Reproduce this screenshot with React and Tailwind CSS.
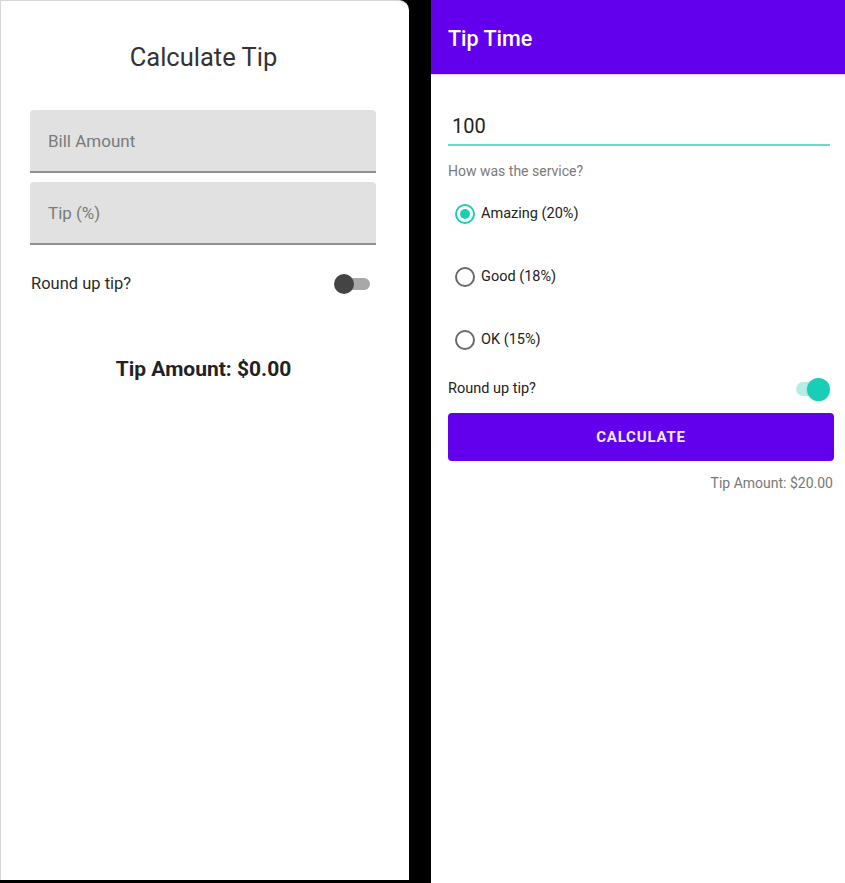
import React from 'react';

const font = { fontFamily: 'Roboto, "Noto Sans", sans-serif' };

// --- Left screen: plain calculator form ---
const FilledField = ({ label, className = '' }) => (
    <div className={`h-[63px] bg-[#e1e1e1] rounded-t-[4px] border-b-2 border-[#8f8f8f] flex items-center px-[18px] pt-[2px] ${className}`}>
        <span className="text-[17px] text-[#7a7a7a]">{label}</span>
    </div>
);

const CalculateTip = () => (
    <div className="w-[409px] h-[880px] bg-white rounded-tr-[10px] border-l border-t border-[#d6d6d6] flex flex-col">
        <h1 className="text-[25.5px] leading-[30px] text-[#333] text-center mt-[41px] pr-[3px]">Calculate Tip</h1>

        <div className="ml-[29px] mr-[33px] mt-[38px] flex flex-col gap-[9px]">
            <FilledField label="Bill Amount" />
            <FilledField label="Tip (%)" />
        </div>

        <div className="ml-[30px] mr-[39px] mt-[27px] h-[24px] flex items-center justify-between">
            <span className="text-[16.5px] text-[#2b2b2b]">Round up tip?</span>
            <div className="relative w-[36px] h-[20px] flex items-center">
                <div className="absolute left-[8px] right-0 h-[12px] rounded-full bg-[#a8a8a8]" />
                <div className="relative w-[20px] h-[20px] rounded-full bg-[#444]" />
            </div>
        </div>

        <p className="mt-[58px] text-center text-[21px] font-bold text-[#222] pr-[3px]">Tip Amount: $0.00</p>
    </div>
);

// --- Right screen: Material "Tip Time" ---
const Radio = ({ label, checked }) => (
    <div className="h-[63px] flex items-center gap-[6px]">
        <div className={`w-[20px] h-[20px] rounded-full border-2 flex items-center justify-center ${checked ? 'border-[#1dcdb8]' : 'border-[#6a6a6a]'}`}>
            {checked && <div className="w-[10px] h-[10px] rounded-full bg-[#1dcdb8]" />}
        </div>
        <span className="text-[14.5px] text-[#222]">{label}</span>
    </div>
);

const TipTime = () => (
    <div className="w-[414px] h-full bg-white flex flex-col">
        <div className="h-[75px] bg-[#6200ee] flex items-center pl-[17px] pt-[5px] border-b border-[#e8c8ff]">
            <span className="text-[21.5px] font-medium text-white">Tip Time</span>
        </div>

        <div className="pl-[17px] pr-[11px] flex flex-col">
            <div className="mt-[37px] mr-[4px] border-b-2 border-[#6fd6ca] pb-[4px] pl-[4px]">
                <span className="text-[20px] leading-[28px] text-[#222]">100</span>
            </div>
            <p className="mt-[15px] text-[14px] leading-[20px] text-[#7a7a7a]">How was the service?</p>

            <div className="mt-[1px] flex flex-col pl-[7px]">
                <Radio label="Amazing (20%)" checked />
                <Radio label="Good (18%)" />
                <Radio label="OK (15%)" />
            </div>

            <div className="mt-[6px] h-[24px] flex items-center justify-between pr-[4px]">
                <span className="text-[14.5px] text-[#222]">Round up tip?</span>
                <div className="relative w-[34px] h-[24px] flex items-center justify-end">
                    <div className="absolute left-0 right-[4px] h-[14px] rounded-full bg-[#b4efe7]" />
                    <div className="relative w-[23px] h-[23px] rounded-full bg-[#19cdb6] shadow" />
                </div>
            </div>

            <button className="mt-[12px] h-[48px] rounded-[4px] bg-[#6200ee] text-[#f0e8ff] text-[15px] font-bold tracking-[0.8px]">
                CALCULATE
            </button>

            <p className="mt-[12px] text-right text-[14px] leading-[20px] text-[#777] pr-[1px]">Tip Amount: $20.00</p>
        </div>
    </div>
);

export default function App() {
    return (
        <div className="w-[845px] h-[883px] bg-black flex justify-between overflow-hidden" style={font}>
            <CalculateTip />
            <TipTime />
        </div>
    );
}
